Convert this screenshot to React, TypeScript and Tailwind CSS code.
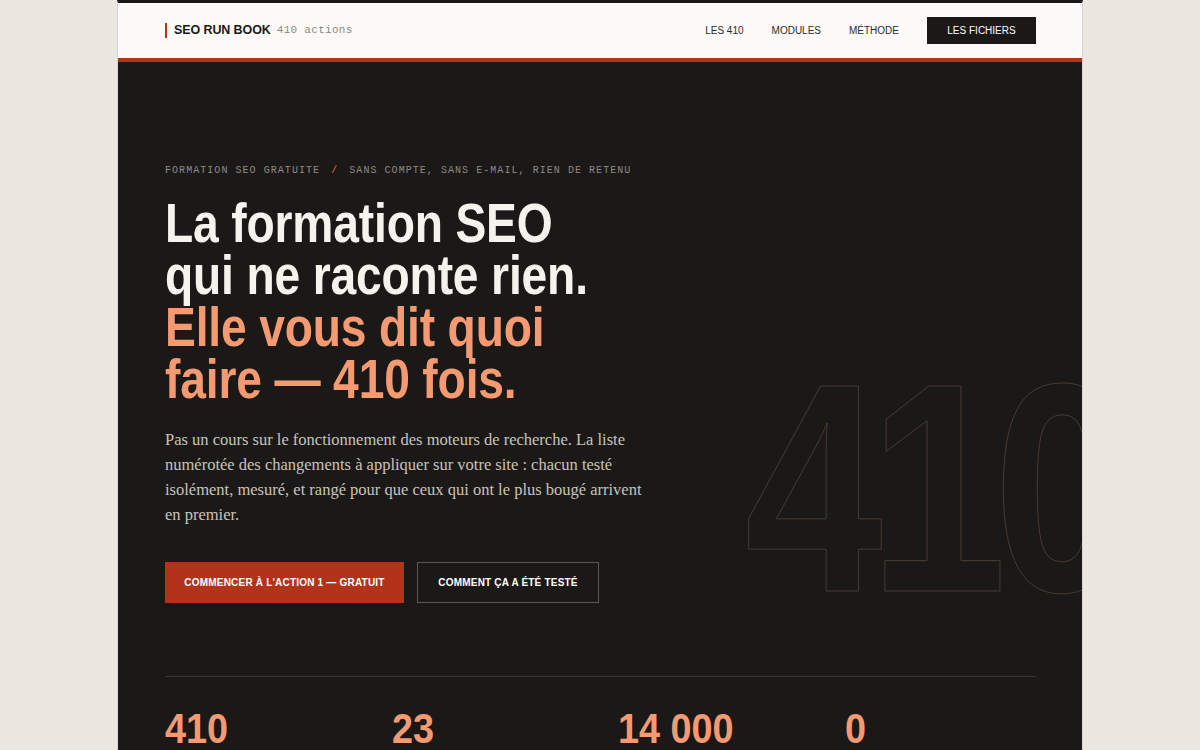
import React from "react";

const sans = { fontFamily: '"Liberation Sans", Arial, sans-serif' };
const mono = { fontFamily: '"Liberation Mono", "DejaVu Sans Mono", monospace' };
const serif = { fontFamily: '"Liberation Serif", "DejaVu Serif", serif' };

export default function App() {
  return (
    <div className="min-h-[750px] w-full bg-[#ebe7e0]" style={sans}>
      <div className="mx-auto w-[966px] border-x border-[#d9d5ce] border-t-[3px] border-t-[#1b1918] overflow-hidden">
        <header className="flex h-[59px] items-center justify-between border-b-[4px] border-b-[#b3341b] bg-[#fcfbf9] pl-[47px] pr-[46px]">
          <div className="flex items-center">
            <span className="mr-[7px] block h-[15px] w-[2px] bg-[#b3341b]" />
            <span className="text-[12.5px] font-bold tracking-[-0.1px] text-[#1b1918]">SEO RUN BOOK</span>
            <span className="ml-[6px] text-[11px] tracking-[0.3px] text-[#8d8983]" style={mono}>
              410 actions
            </span>
          </div>
          <nav className="flex items-center text-[10px] text-[#2c2a28]">
            <a className="mr-[28px]">LES 410</a>
            <a className="mr-[28px]">MODULES</a>
            <a className="mr-[28px]">MÉTHODE</a>
            <a className="flex h-[27px] w-[109px] items-center justify-center bg-[#1b1918] text-white">LES FICHIERS</a>
          </nav>
        </header>

        <main className="relative bg-[#1b1918] pl-[47px] pr-[46px] pt-[101px]">
          <div
            aria-hidden
            className="pointer-events-none absolute left-[627px] top-[277px] origin-left scale-x-[0.83] select-none whitespace-nowrap text-[298px] font-bold leading-none tracking-[-16px] text-transparent [-webkit-text-stroke:1px_#4d3d34]"
          >
            410
          </div>

          <div className="relative">
            <p className="text-[10px] tracking-[1.05px] text-[#8f8a83]" style={mono}>
              FORMATION SEO GRATUITE <span className="mx-[4px] text-[#e2673f]">/</span> SANS COMPTE, SANS E-MAIL, RIEN DE RETENU
            </p>

            <h1 className="mt-[19px] origin-left scale-x-[0.84] whitespace-nowrap text-[55px] font-bold leading-[52px] tracking-[-0.2px] text-[#f6f3ee]">
              La formation SEO
              <br />
              qui ne raconte rien.
              <br />
              <span className="text-[#f49a72]">
                Elle vous dit quoi
                <br />
                faire — 410 fois.
              </span>
            </h1>

            <p className="mt-[22px] w-[490px] text-[16.5px] leading-[25px] text-[#c9c3ba]" style={serif}>
              Pas un cours sur le fonctionnement des moteurs de recherche. La liste numérotée des changements à appliquer sur votre site : chacun testé isolément, mesuré, et rangé pour que ceux qui ont le plus bougé arrivent en premier.
            </p>

            <div className="mt-[35px] flex gap-[13px]">
              <a className="flex h-[41px] w-[239px] items-center justify-center bg-[#b3321a] text-[10px] font-bold tracking-[0.2px] text-white">
                COMMENCER À L'ACTION 1 — GRATUIT
              </a>
              <a className="flex h-[41px] w-[182px] items-center justify-center border border-[#5c5752] text-[10px] font-bold tracking-[0.2px] text-white">
                COMMENT ÇA A ÉTÉ TESTÉ
              </a>
            </div>

            <div className="mt-[73px] h-px bg-[#3a3634]" />

            <div className="grid grid-cols-4 gap-[35px] pt-[31px] pb-[40px]">
              {["410", "23", "14 000", "0"].map((n) => (
                <div
                  key={n}
                  className="origin-left scale-x-[0.9] whitespace-nowrap text-[42px] font-bold leading-none text-[#f49a72]"
                >
                  {n}
                </div>
              ))}
            </div>
          </div>
        </main>
      </div>
    </div>
  );
}
